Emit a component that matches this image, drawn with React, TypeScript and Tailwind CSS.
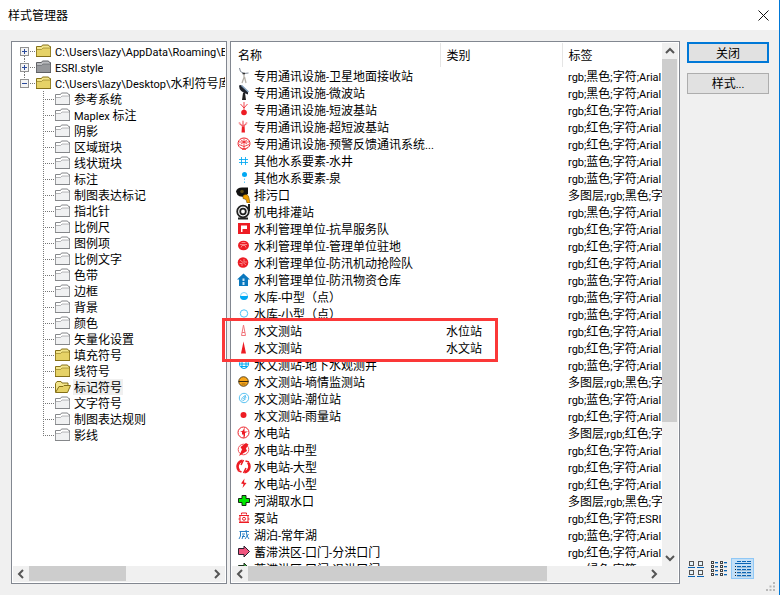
import type { ReactNode } from 'react';
import clsx from 'clsx';

type FolderKind = 'full' | 'locked' | 'empty' | 'open';

const roots: { label: string; kind: FolderKind; open: boolean }[] = [
  { label: 'C:\\Users\\lazy\\AppData\\Roaming\\ESRI', kind: 'full', open: false },
  { label: 'ESRI.style', kind: 'locked', open: false },
  { label: 'C:\\Users\\lazy\\Desktop\\水利符号库', kind: 'full', open: true },
];

const folders: { label: string; kind: FolderKind }[] = [
  { label: '参考系统', kind: 'empty' },
  { label: 'Maplex 标注', kind: 'empty' },
  { label: '阴影', kind: 'empty' },
  { label: '区域斑块', kind: 'empty' },
  { label: '线状斑块', kind: 'empty' },
  { label: '标注', kind: 'empty' },
  { label: '制图表达标记', kind: 'empty' },
  { label: '指北针', kind: 'empty' },
  { label: '比例尺', kind: 'empty' },
  { label: '图例项', kind: 'empty' },
  { label: '比例文字', kind: 'empty' },
  { label: '色带', kind: 'empty' },
  { label: '边框', kind: 'empty' },
  { label: '背景', kind: 'empty' },
  { label: '颜色', kind: 'empty' },
  { label: '矢量化设置', kind: 'empty' },
  { label: '填充符号', kind: 'full' },
  { label: '线符号', kind: 'full' },
  { label: '标记符号', kind: 'open' },
  { label: '文字符号', kind: 'empty' },
  { label: '制图表达规则', kind: 'empty' },
  { label: '影线', kind: 'empty' },
];

const RED = '#ed1c24';
const BLUE = '#00a8f3';

const icons: Record<string, ReactNode> = {
  satellite: (
    <g fill="none">
      <path d="M3.500 0 4.500 3.500 8 5.500l4.500-.5" stroke="#7d8794" />
      <path d="M8 6v3.500l-2 5.500M8.500 9l1.500 6" stroke="#b5b0a8" strokeWidth="1.300" />
      <path d="M6.500 5.500h2.500" stroke="#333" strokeWidth="1.500" />
    </g>
  ),
  microwave: (
    <g>
      <path d="M3 .5Q3 7 12 9.500L12 7 5 0z" fill="#20242c" />
      <path d="m5.500.5 7 6.500" stroke="#7f9cba" strokeWidth="1.500" />
      <path d="M7 8h2l1 7H6z" fill="#222" />
    </g>
  ),
  shortwave: (
    <g stroke={RED} fill="none">
      <path d="M8 0v9M4.500 2 8 6l3.500-4" strokeOpacity=".8" />
      <circle cx="8" cy="10.500" r="2.800" fill={RED} stroke="none" />
    </g>
  ),
  ultrashort: (
    <g fill={RED}>
      <path d="M6 6h2.500l.5 7.500H5.500z" />
      <path d="M3.500 4.500 7 7.500 10.500 4.500M7 2v5" stroke="#f2626a" fill="none" strokeWidth="1.300" />
      <circle cx="3.500" cy="4" r="1" fill="#f8a0a4" />
      <circle cx="7" cy="2.500" r="1" fill="#f8a0a4" />
      <circle cx="10.500" cy="4" r="1" fill="#f8a0a4" />
    </g>
  ),
  warning: (
    <g fill="none" stroke={RED}>
      <path d="M6 12.500C0 11 1 2 8 2s8 9 2 10.500" />
      <path d="M3 6h10M5 4l6 4M11 4 5 8M8 3v10M3 8.500l5 2 5-2" strokeOpacity=".75" />
      <path d="M6 13h4" strokeWidth="1.500" />
    </g>
  ),
  well: <path d="M5.500 4v8M9.500 4v8M3 6.500h9M3 9.500h9" stroke={BLUE} fill="none" strokeOpacity=".85" />,
  spring: (
    <g fill={BLUE}>
      <circle cx="8.500" cy="4.500" r="2.500" />
      <path d="M8 8.500h1V10H8zM8 11.500h1V13H8z" fillOpacity=".6" />
    </g>
  ),
  outfall: (
    <g>
      <path d="M0 4.500Q1 .5 6 .5h6v6L9.500 9.500q-6 1-8-1.500z" fill="#111" />
      <circle cx="6" cy="4.500" r="1.800" fill="#5b4a14" />
      <path d="M7 8.500q5-3 6 2.500l1 5h-3l-1-3.500-3-1z" fill="#f0a000" stroke="#503800" strokeWidth=".5" />
    </g>
  ),
  pump: (
    <g fill="none" stroke="#222">
      <circle cx="7" cy="7.500" r="5.800" strokeWidth="1.800" />
      <circle cx="7" cy="7.500" r="2.800" strokeWidth="1.800" />
      <path d="M13 0v7M2 14.500h10" strokeWidth="2" />
    </g>
  ),
  flag: (
    <g>
      <path d="M2 2h12v11H2z" fill={RED} />
      <path d="M5 11V4.500h6V8H6.500v3z" fill="#fff" />
    </g>
  ),
  station: (
    <g>
      <ellipse cx="7.500" cy="7.500" rx="5.500" ry="4.800" fill={RED} />
      <path d="M4 6.500h7M5 9.500l1-2h3l1 2M5.500 4.500h4" stroke="#fba0a0" fill="none" strokeWidth=".8" />
    </g>
  ),
  rescue: (
    <g>
      <circle cx="7" cy="7.500" r="5.300" fill={RED} />
      <path d="m4 5 6 5M3.500 8.500h3M8 4v3h3M6 11V9" stroke="#fba0a0" fill="none" strokeWidth=".8" />
    </g>
  ),
  warehouse: (
    <g>
      <path d="M1 7.500 7.500 1.500l6.500 6h-2V14H3V7.500z" fill="#0a78be" />
      <path d="M6.500 6.500h2V13h-2z" fill="#cfe7f7" />
      <path d="M5 9.500h5" stroke="#0a78be" />
    </g>
  ),
  reservoirM: (
    <g>
      <circle cx="8" cy="7" r="3.500" fill="#fff" stroke="#7fd4fa" />
      <path d="M4 7h8a4 4 0 0 1-8 0z" fill={BLUE} />
    </g>
  ),
  reservoirS: <circle cx="8" cy="7.500" r="3.700" fill="none" stroke="#4fc2f7" />,
  level: <path d="M7.500 2 5.500 12.500h4zM6 9.500h3" fill="none" stroke="#f2767c" />,
  hydro: <path d="M7.500 1.500 10 13.500H5z" fill={RED} />,
  groundwater: (
    <g fill="none" stroke={BLUE}>
      <circle cx="8" cy="7" r="4.500" />
      <path d="M3.500 7h9M5 9.500h6M6 3v8M10 3v8" />
    </g>
  ),
  moisture: (
    <g stroke="#3b2c10">
      <circle cx="7.500" cy="7.500" r="4.800" fill="#f9a61a" strokeOpacity=".8" />
      <path d="M2.500 7.500h10" />
      <path d="M5.500 10h4" strokeOpacity=".5" />
    </g>
  ),
  tide: (
    <g fill="none" stroke="#5cc3f2">
      <circle cx="8" cy="7" r="4.700" />
      <path d="M6 9.500c-1-2 1-4.500 3.500-4.500L7.500 7.500l2 .5-3 2M9 4l1 3" />
    </g>
  ),
  rain: <circle cx="7.500" cy="7" r="3" fill={RED} />,
  power: (
    <g>
      <circle cx="7.500" cy="7.500" r="5.500" fill="none" stroke={RED} />
      <path d="M8.500 2v4.500H12L9 8v3l-1.500 2.500V9.500H6V7H4l3-1.500z" fill={RED} />
    </g>
  ),
  powerM: (
    <g>
      <circle cx="7.500" cy="7.500" r="5.300" fill="none" stroke="#f2555c" />
      <path d="M10 1 4.500 5 6 7.500l-3 6.500 8-5-1-2.500 2.500-4z" fill={RED} />
    </g>
  ),
  powerL: (
    <g fill="none" stroke={RED}>
      <path d="M6.500 1.800a5.800 5.800 0 0 0-3.500 9.500M8.500 13.200a5.800 5.800 0 0 0 3.500-9.500" strokeWidth="2.600" />
      <path d="M7.500 1 5 6M7.500 14 10 9M2 11.500l3.500 1.500M9.500 2l3.500 1" strokeWidth="1.500" />
    </g>
  ),
  powerS: <path d="M8.500 2.500 5 7.500l2.500.5-1 4 4-5L8 6.500z" fill={RED} />,
  intake: <path d="M6 2.500h4v3h3.500v4H10v3H6v-3H2.500v-4H6z" fill="#00e800" stroke="#152815" />,
  pumping: (
    <g fill="none" stroke={RED}>
      <path d="M5.500 4.500V3h5v1.500M3 5.500h10M4 5.500V12h8V5.500M2.500 9H4M12 9h1.500M3 12.500h10" />
      <circle cx="8" cy="8.800" r="1.500" />
    </g>
  ),
  swamp: (
    <g fill="none" stroke="#2a7fc4">
      <path d="M3.500 4.500H13M4.500 4.500V9L3 12M6 7h3M6 9.500h3M7.500 8 6 12M10 3l1 6 2 3M12.500 7 9 12" />
    </g>
  ),
  arrowPink: <path d="M2.500 4.500H8V2l5.500 5.500L8 13v-2.500H2.500z" fill="#f0567f" stroke="#2c2030" />,
  arrowGreen: <path d="M2.500 4.500H8V2l5.500 5.500L8 13v-2.500H2.500z" fill="#3fae49" stroke="#20301f" />,
};

const black = 'rgb;黑色;字符;Arial';
const red = 'rgb;红色;字符;Arial';
const blue = 'rgb;蓝色;字符;Arial';

const symbols: { icon: string; name: string; category?: string; tags: string }[] = [
  { icon: 'satellite', name: '专用通讯设施-卫星地面接收站', tags: black },
  { icon: 'microwave', name: '专用通讯设施-微波站', tags: black },
  { icon: 'shortwave', name: '专用通讯设施-短波基站', tags: red },
  { icon: 'ultrashort', name: '专用通讯设施-超短波基站', tags: red },
  { icon: 'warning', name: '专用通讯设施-预警反馈通讯系统...', tags: red },
  { icon: 'well', name: '其他水系要素-水井', tags: blue },
  { icon: 'spring', name: '其他水系要素-泉', tags: blue },
  { icon: 'outfall', name: '排污口', tags: '多图层;rgb;黑色;字符' },
  { icon: 'pump', name: '机电排灌站', tags: black },
  { icon: 'flag', name: '水利管理单位-抗旱服务队', tags: red },
  { icon: 'station', name: '水利管理单位-管理单位驻地', tags: red },
  { icon: 'rescue', name: '水利管理单位-防汛机动抢险队', tags: red },
  { icon: 'warehouse', name: '水利管理单位-防汛物资仓库', tags: blue },
  { icon: 'reservoirM', name: '水库-中型（点）', tags: blue },
  { icon: 'reservoirS', name: '水库-小型（点）', tags: blue },
  { icon: 'level', name: '水文测站', category: '水位站', tags: red },
  { icon: 'hydro', name: '水文测站', category: '水文站', tags: red },
  { icon: 'groundwater', name: '水文测站-地下水观测井', tags: blue },
  { icon: 'moisture', name: '水文测站-墒情监测站', tags: '多图层;rgb;黑色;字符' },
  { icon: 'tide', name: '水文测站-潮位站', tags: blue },
  { icon: 'rain', name: '水文测站-雨量站', tags: red },
  { icon: 'power', name: '水电站', tags: '多图层;rgb;红色;字符' },
  { icon: 'powerM', name: '水电站-中型', tags: red },
  { icon: 'powerL', name: '水电站-大型', tags: red },
  { icon: 'powerS', name: '水电站-小型', tags: red },
  { icon: 'intake', name: '河湖取水口', tags: '多图层;rgb;黑色;字符' },
  { icon: 'pumping', name: '泵站', tags: 'rgb;红色;字符;ESRI' },
  { icon: 'swamp', name: '湖泊-常年湖', tags: blue },
  { icon: 'arrowPink', name: '蓄滞洪区-口门-分洪口门', tags: red },
  { icon: 'arrowGreen', name: '蓄滞洪区-口门-退洪口门', tags: 'rgb;绿色;字符;Arial' },
];

const folderColors = {
  full: { line: '#857018', back: '#f3e58b', front: '#e6d266' },
  open: { line: '#857018', back: '#f3e58b', front: '#e6d266' },
  locked: { line: '#5f6165', back: '#b9bbbe', front: '#96989b' },
  empty: { line: '#85878a', back: '#ffffff', front: '#f0f1f2' },
};

// Latin runs are set one step smaller than the Chinese around them
function Mixed({ text }: { text: string }) {
  return text.split(/([\x20-\x7e]+)/).map((run, i) =>
    i % 2 ? (
      <span key={i} className="font-['Roboto','Liberation_Sans',sans-serif] text-[11px]">
        {run}
      </span>
    ) : (
      run
    ),
  );
}

function Folder({ kind }: { kind: FolderKind }) {
  const c = folderColors[kind];
  return (
    <svg viewBox="0 0 16 16" className="size-4 shrink-0" stroke={c.line}>
      {kind === 'open' ? (
        <>
          <path d="M.5 13V4.500L2 2.500h4l1 1.500h6v3" fill={c.back} />
          <path d="M.5 13.500 4 7.500h4l1-1h6.500l-3 7z" fill={c.front} />
        </>
      ) : (
        <>
          <path d="M.5 13.500v-10h5l1-1.500h6l1 1.500h1v10z" fill={c.back} />
          <path d="M.5 13.500v-7h5l1.500-1.500h7.500v8.500z" fill={c.front} strokeOpacity=".6" />
          <path d="M0 13.500h15" />
        </>
      )}
    </svg>
  );
}

function Expander({ open, first }: { open: boolean; first: boolean }) {
  return (
    <svg viewBox="0 0 16 16" className="size-4 shrink-0" fill="none" shapeRendering="crispEdges">
      <g stroke="#777" strokeDasharray="1 1">
        {!first && <path d="M4.500 0v4" />}
        {!open && <path d="M4.500 13v3" />}
        <path d="M10 8.500h6" />
      </g>
      <rect x=".5" y="4.500" width="8" height="8" fill="#f4f4f4" stroke="#919191" />
      <path d={open ? 'M2 8.500h5' : 'M2 8.500h5M4.500 6v5'} stroke="#2b4a9b" />
    </svg>
  );
}

function Branch({ last }: { last: boolean }) {
  return (
    <svg
      viewBox="0 0 12 16"
      className="h-4 w-3 shrink-0"
      fill="none"
      stroke="#777"
      strokeDasharray="1 1"
      shapeRendering="crispEdges"
    >
      <path d={last ? 'M.5 0v9' : 'M.5 0v16'} />
      <path d="M2 8.500h10" />
    </svg>
  );
}

function Arrow({ d, label }: { d: string; label: string }) {
  return (
    <button type="button" aria-label={label} className="flex size-4 shrink-0 items-center justify-center">
      <svg viewBox="0 0 10 10" className="size-2.5" fill="none" stroke="#555" strokeWidth="2">
        <path d={d} />
      </svg>
    </button>
  );
}

function HorizontalScroll({ thumb }: { thumb: string }) {
  return (
    <div className="flex h-4 shrink-0 bg-[#f0f0f0]">
      <Arrow d="M7 1 3 5l4 4" label="向左滚动" />
      <div className="flex-1">
        <div className={clsx('h-[15px] bg-[#cdcdcd]', thumb)} />
      </div>
      <Arrow d="m3 1 4 4-4 4" label="向右滚动" />
    </div>
  );
}

function StyleTree() {
  return (
    <nav className="flex w-[216px] shrink-0 flex-col border border-[#828790] bg-white p-px">
      <ul className="min-h-0 flex-1 overflow-hidden whitespace-nowrap">
        {roots.map((root, i) => (
          <li key={root.label} className="flex h-4 items-center pl-[7px]">
            <Expander open={root.open} first={i === 0} />
            <Folder kind={root.kind} />
            <span className="ml-px h-4 min-w-0 overflow-hidden pl-[2px] leading-4">
              <Mixed text={root.label} />
            </span>
          </li>
        ))}
        {folders.map((folder, i) => (
          <li key={folder.label} className="flex h-4 items-center pl-[30px]">
            <Branch last={i === folders.length - 1} />
            <Folder kind={folder.kind} />
            <span className={clsx('ml-[2px] h-4 px-px leading-4', folder.kind === 'open' && 'bg-[#f0f0f0]')}>
              <Mixed text={folder.label} />
            </span>
          </li>
        ))}
      </ul>
      <HorizontalScroll thumb="w-[54%]" />
    </nav>
  );
}

function SymbolTable() {
  return (
    <section className="relative flex min-w-0 flex-1 border border-[#828790] bg-white p-px">
      <div className="flex min-w-0 flex-1 flex-col">
        <div className="min-h-0 flex-1 overflow-hidden">
          <table className="w-full table-fixed border-collapse text-left whitespace-nowrap">
            <thead>
              <tr className="h-6">
                <th className="w-[208px] border-r border-[#e5e5e5] p-0 pl-1.5 font-normal">名称</th>
                <th className="w-[122px] border-r border-[#e5e5e5] p-0 pl-1.5 font-normal">类别</th>
                <th className="p-0 pl-1.5 font-normal">标签</th>
              </tr>
            </thead>
            <tbody>
              {symbols.map((symbol, i) => (
                <tr key={i} className="h-[17px] leading-[17px]">
                  <td className="overflow-hidden p-0 pl-1">
                    <div className="flex h-[17px] items-center gap-0.5">
                      <svg viewBox="0 0 16 16" className="size-4 shrink-0">
                        {icons[symbol.icon]}
                      </svg>
                      <span className="h-[17px]">
                        <Mixed text={symbol.name} />
                      </span>
                    </div>
                  </td>
                  <td className="p-0 pl-1.5">{symbol.category}</td>
                  <td className="p-0 pl-1.5">
                    <div className="h-[17px] overflow-hidden">
                      <Mixed text={symbol.tags} />
                    </div>
                  </td>
                </tr>
              ))}
            </tbody>
          </table>
        </div>
        <HorizontalScroll thumb="w-3/4" />
      </div>
      <div className="flex w-4 shrink-0 flex-col bg-[#f0f0f0] pb-4">
        <Arrow d="m1 7 4-4 4 4" label="向上滚动" />
        <div className="flex-1">
          <div className="h-[74%] w-[15px] bg-[#cdcdcd]" />
        </div>
        <Arrow d="m1 3 4 4 4-4" label="向下滚动" />
      </div>
      {/* highlight around the two hydrometric stations */}
      <div className="pointer-events-none absolute top-[276px] -left-[9px] h-11 w-[276px] border-3 border-[#fb3838]" />
    </section>
  );
}

function ViewButtons() {
  return (
    <div className="flex h-[21px]">
      <button type="button" aria-label="大图标" className="w-[23px] pl-[3px]">
        <svg viewBox="0 0 16 16" className="size-4" fill="#e8f4fa" shapeRendering="crispEdges">
          <path d="M1.500.5h4v4h-4zM10.500.5h4v4h-4zM1.500 9.500h4v4h-4zM10.500 9.500h4v4h-4z" stroke="#555" />
          <path d="M0 6.500h7M9 6.500h7M0 15.500h7M9 15.500h7" stroke="#0a64b4" />
        </svg>
      </button>
      <button type="button" aria-label="列表" className="w-[23px] pl-[3px]">
        <svg viewBox="0 0 16 16" className="size-4" fill="#fff" shapeRendering="crispEdges">
          <path
            d="M.5.5h2v2h-2zM.5 4.500h2v2h-2zM.5 8.500h2v2h-2zM.5 12.500h2v2h-2zM9.500.5h2v2h-2zM9.500 4.500h2v2h-2zM9.500 8.500h2v2h-2zM9.500 12.500h2v2h-2z"
            stroke="#444"
          />
          <path
            d="M4 1.500h3M4 5.500h3M4 9.500h3M4 13.500h3M13 1.500h3M13 5.500h3M13 9.500h3M13 13.500h3"
            stroke="#0a64b4"
          />
          <path
            d="M4 2.500h3M4 6.500h3M4 10.500h3M4 14.500h3M13 2.500h3M13 6.500h3M13 10.500h3M13 14.500h3"
            stroke="#a9c0d4"
          />
        </svg>
      </button>
      <button
        type="button"
        aria-label="详细信息"
        aria-pressed="true"
        className="w-[23px] border border-[#90c8f6] bg-[#c4e0f7] pl-[3px]"
      >
        <svg viewBox="0 0 16 16" className="size-4" fill="none" shapeRendering="crispEdges">
          <path d="M2 .5h4M7 .5h4M12 .5h4" stroke="#0a64b4" />
          <path d="M0 2.500h16" stroke="#0a64b4" />
          <path d="M0 5.500h1M0 8.500h1M0 11.500h1M0 14.500h1" stroke="#222" />
          <path
            d="M2 5.500h4M7 5.500h4M12 5.500h4M2 8.500h4M7 8.500h4M12 8.500h4M2 11.500h4M7 11.500h4M12 11.500h4M2 14.500h4M7 14.500h4M12 14.500h4"
            stroke="#0a64b4"
          />
          <path d="M2 6.500h14M2 9.500h14M2 12.500h14M2 15.500h14" stroke="#9dbdd6" />
        </svg>
      </button>
    </div>
  );
}

export default function App() {
  return (
    <div className="relative flex h-screen flex-col border-r border-[#0078d7] bg-[#f0f0f0] font-['Noto_Sans_CJK_SC',sans-serif] text-xs text-black">
      <header className="flex h-[30px] shrink-0 items-center justify-between bg-white pr-2.5 pl-2">
        <h1>样式管理器</h1>
        <button type="button" aria-label="关闭窗口">
          <svg viewBox="0 0 11 11" className="size-[11px]" stroke="#111" fill="none">
            <path d="m.5.5 10 10M10.500.5l-10 10" />
          </svg>
        </button>
      </header>

      <main className="flex min-h-0 flex-1 pt-[11px] pr-2 pb-[11px] pl-[11px]">
        <StyleTree />
        <div className="ml-[3px] flex min-w-0 flex-1">
          <SymbolTable />
        </div>
        <aside className="ml-[5px] flex w-[86px] shrink-0 flex-col justify-between pt-px pb-[5px]">
          <div className="flex flex-col gap-2.5 px-[2px]">
            <button type="button" className="h-[21px] border-2 border-[#0078d7] bg-[#e1e1e1] leading-4">
              关闭
            </button>
            <button type="button" className="h-[21px] border border-[#adadad] bg-[#e1e1e1] leading-4">
              <Mixed text="样式..." />
            </button>
          </div>
          <ViewButtons />
        </aside>
      </main>

      {/* resize grip */}
      <svg viewBox="0 0 9 9" className="absolute right-1 bottom-1 size-[9px]" fill="#b8b8b8">
        <path d="M7 0h2v2H7zM7 3.500h2v2H7zM3.500 3.500h2v2h-2zM7 7h2v2H7zM3.500 7h2v2h-2zM0 7h2v2H0z" />
      </svg>
    </div>
  );
}
